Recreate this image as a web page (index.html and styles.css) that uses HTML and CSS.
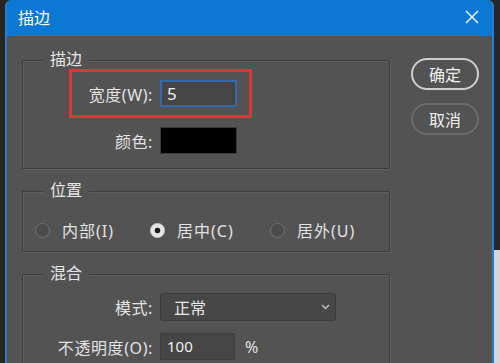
FILE: index.html
```html
<!DOCTYPE html>
<html lang="zh-CN">
<head>
    <meta charset="UTF-8">
    <title>描边</title>
    <link rel="stylesheet" href="styles.css">
</head>
<body>
    <div class="frame">
        <div class="side-left"></div>

        <div class="dialog">
            <div class="titlebar">
                <span class="title">描边</span>
                <svg class="close" width="14" height="14" viewBox="0 0 14 14">
                    <path d="M1 1 L13 13 M13 1 L1 13" stroke="#e3eef9" stroke-width="1.6" fill="none"/>
                </svg>
            </div>

            <div class="content">
                <div class="groups">
                    <!-- 描边 -->
                    <div class="group group-stroke">
                        <div class="group-title">描边</div>
                        <div class="focus">
                            <div class="row">
                                <span class="label">宽度(W):</span>
                                <div class="field field-active">5</div>
                            </div>
                        </div>
                        <div class="row row-color">
                            <span class="label">颜色:</span>
                            <div class="swatch"></div>
                        </div>
                    </div>

                    <!-- 位置 -->
                    <div class="group group-position">
                        <div class="group-title">位置</div>
                        <div class="radio-row">
                            <div class="radio-item"><span class="radio"></span>内部(I)</div>
                            <div class="radio-item"><span class="radio radio-on"></span>居中(C)</div>
                            <div class="radio-item"><span class="radio"></span>居外(U)</div>
                        </div>
                    </div>

                    <!-- 混合 -->
                    <div class="group group-blend">
                        <div class="group-title">混合</div>
                        <div class="row row-mode">
                            <span class="label">模式:</span>
                            <div class="select">
                                <span>正常</span>
                                <svg width="9" height="6" viewBox="0 0 9 6">
                                    <path d="M1 1 L4.5 4.5 L8 1" stroke="#c8c8c8" stroke-width="1.3" fill="none"/>
                                </svg>
                            </div>
                        </div>
                        <div class="row row-opacity">
                            <span class="label">不透明度(O):</span>
                            <div class="field field-small">100</div>
                            <span class="unit">%</span>
                        </div>
                    </div>
                </div>

                <div class="buttons">
                    <button class="btn btn-default">确定</button>
                    <button class="btn">取消</button>
                </div>
            </div>
        </div>

        <div class="side-right"></div>
    </div>
</body>
</html>
```

FILE: styles.css
```css
* {
    margin: 0;
    padding: 0;
    box-sizing: border-box;
}

body {
    font-family: 'Noto Sans', 'Noto Sans CJK SC', sans-serif;
    background: #29241f;
    width: 500px;
    height: 363px;
    overflow: hidden;
}

.frame {
    display: flex;
    height: 363px;
}

.side-left {
    width: 5px;
    background: #2a2520;
}

.side-right {
    width: 6px;
    background: linear-gradient(to bottom, #24272b 0, #24272b 250px, #d4d6d8 250px);
}

.dialog {
    width: 489px;
    background: #535353;
    border-left: 2px solid #2b7bd1;
    border-right: 2px solid #2b7bd1;
    border-radius: 6px 6px 0 0;
    overflow: hidden;
    color: #e2e2e2;
    font-size: 16px;
}

.titlebar {
    height: 36px;
    background: #0b78d4;
    display: flex;
    align-items: center;
    justify-content: space-between;
    padding: 0 13px 2px 11px;
}

.title {
    color: #fff;
    font-size: 16px;
}

.content {
    display: flex;
    gap: 21px;
    padding: 0 12px 0 15px;
}

.groups {
    width: 368px;
}

.group {
    border: 1px solid #3f3f3f;
    box-shadow: inset 1px 1px 0 #5e5e5e, 1px 1px 0 #5e5e5e;
}

.group-stroke {
    margin-top: 24px;
    padding-bottom: 14px;
}

.group-position {
    margin-top: 22px;
    padding-bottom: 11px;
}

.group-blend {
    margin-top: 22px;
    padding-bottom: 20px;
}

.group-title {
    width: fit-content;
    margin: -11px 0 0 20px;
    padding: 0 7px;
    background: #535353;
    line-height: 19px;
    font-size: 16px;
    color: #e6e6e6;
}

.row {
    display: flex;
    align-items: center;
    gap: 7px;
}

.label {
    width: 130px;
    text-align: right;
    white-space: nowrap;
    letter-spacing: 0.6px;
}

.focus {
    width: fit-content;
    margin-left: 46px;
    border: 3px solid #e3343c;
    padding: 8px 12px 8px 0;
}

.focus .label {
    width: 81px;
}

.field {
    width: 77px;
    height: 27px;
    background: #454545;
    border: 1px solid #3d3d3d;
    padding-left: 6px;
    line-height: 25px;
    color: #f0f0f0;
}

.field-active {
    border: 2px solid #3568aa;
    padding-left: 5px;
    line-height: 23px;
    font-size: 17px;
}

.field-small {
    width: 75px;
    font-size: 15px;
}

.row-color {
    margin-top: 9px;
}

.swatch {
    width: 77px;
    height: 27px;
    background: #000;
    border: 1px solid #3a3a3a;
}

.radio-row {
    display: flex;
    align-items: center;
    height: 20px;
    margin-top: 20px;
    padding-left: 12px;
}

.radio-item {
    display: flex;
    align-items: center;
    gap: 12px;
    width: 115px;
    letter-spacing: 1px;
}

.radio-item:nth-child(2) {
    width: 120px;
}

.radio {
    width: 15px;
    height: 15px;
    border-radius: 50%;
    border: 1px solid #707070;
    background: #4b4b4b;
}

.radio-on {
    background: radial-gradient(circle, #1a1a1a 0, #1a1a1a 2.5px, #e6e6e6 3.2px);
    border-color: #d6d6d6;
}

.row-mode {
    margin-top: 10px;
}

.select {
    width: 176px;
    height: 28px;
    background: #474747;
    border: 1px solid #3c3c3c;
    border-radius: 3px;
    display: flex;
    align-items: center;
    justify-content: space-between;
    padding: 0 5px 0 13px;
    color: #e8e8e8;
}

.row-opacity {
    margin-top: 12px;
}

.unit {
    margin-left: 3px;
}

.buttons {
    display: flex;
    flex-direction: column;
    gap: 13px;
    padding-top: 22px;
}

.btn {
    width: 68px;
    height: 32px;
    border-radius: 16px;
    border: 2px solid #6b6b6b;
    background: #535353;
    color: #f0f0f0;
    font-family: inherit;
    font-size: 16px;
}

.btn-default {
    border-color: #cfcfcf;
}
```
